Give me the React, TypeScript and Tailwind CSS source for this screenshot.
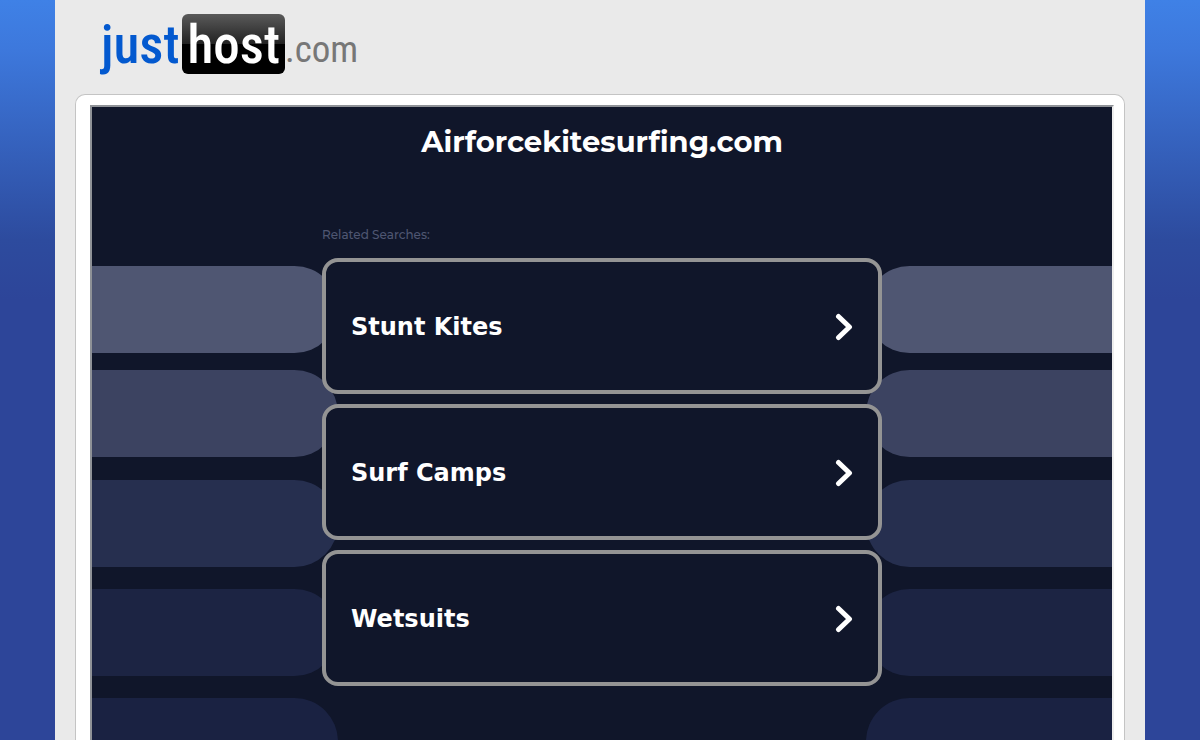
const searches = ['Stunt Kites', 'Surf Camps', 'Wetsuits'];

const stripes = [
  'bg-[#4f5672] mb-[17px]',
  'bg-[#3c4361] mb-[23px]',
  'bg-[#262f4f] mb-[22px]',
  'bg-[#1c2443] mb-[22px]',
  'bg-[#1a2242]',
];

function Logo() {
  return (
    <a
      href="#"
      aria-label="justhost.com"
      className="flex h-[60px] w-fit items-start whitespace-nowrap font-['Roboto_Condensed','Open_Sans_Condensed','Open_Sans',sans-serif] leading-[62px]"
    >
      <span className="text-[53px] font-medium text-[#0359cf]">just</span>
      <span className="ml-[3px] h-[60px] rounded-[6px] bg-[linear-gradient(#5a5a5a,#222_50%,#000_50%)] px-[5px] text-[53px] font-medium text-white">
        host
      </span>
      <span className="pt-[5px] text-[37px] text-[#777]">.com</span>
    </a>
  );
}

function Chevron() {
  return (
    <svg width="18" height="28" viewBox="0 0 18 28" fill="none" aria-hidden="true">
      <path d="M3.5 3.5 14.5 14 3.5 24.5" stroke="#fff" strokeWidth="5" strokeLinecap="round" strokeLinejoin="round" />
    </svg>
  );
}

function StripeColumn({ side }: { side: 'left' | 'right' }) {
  return (
    <div className="w-[calc(50%-264px)]">
      {stripes.map((stripe) => (
        <div
          key={stripe}
          className={`h-[87px] ${side === 'left' ? 'rounded-r-[44px]' : 'rounded-l-[44px]'} ${stripe}`}
        />
      ))}
    </div>
  );
}

export default function App() {
  return (
    <div className="min-h-screen bg-[#2d4599] bg-[linear-gradient(#3f81e6,#3d78dc_50px,#2d4b9e_240px,#2d4599_300px)]">
      <div className="mx-auto flex min-h-screen max-w-[1090px] flex-col bg-[#eaeaea] px-5">
        <header className="px-[26px] pt-[14px] pb-5">
          <Logo />
        </header>
        <div className="flex flex-1 flex-col rounded-t-[10px] border border-b-0 border-[#c4c4c4] bg-white px-[14px] pt-[10px] pr-[10px]">
          <main className="relative flex flex-1 flex-col items-center overflow-hidden border-2 border-b-0 border-t-[#8f9297] border-r-[#eeeeee] border-l-[#8f9297] bg-[#10162a] px-4 pb-12">
            <div aria-hidden="true" className="absolute inset-0 flex justify-between pt-[159px]">
              <StripeColumn side="left" />
              <StripeColumn side="right" />
            </div>
            <h1 className="relative mt-4 font-['Montserrat','Inter',sans-serif] text-[29px] leading-[38px] font-bold text-white">
              Airforcekitesurfing.com
            </h1>
            <section className="relative mt-[66px] w-full max-w-[560px]">
              <h2 className="font-['Montserrat','Inter',sans-serif] text-xs leading-4 font-medium text-[#4f5672]">
                Related Searches:
              </h2>
              <ul className="mt-[15px] flex flex-col gap-[10px]">
                {searches.map((label) => (
                  <li key={label}>
                    <a
                      href="#"
                      className="flex h-[136px] items-center justify-between rounded-2xl border-4 border-[#949494] bg-[#10162a] px-[25px] pt-0.5 font-['Verdana','DejaVu_Sans',sans-serif] text-2xl font-bold text-white"
                    >
                      {label}
                      <Chevron />
                    </a>
                  </li>
                ))}
              </ul>
            </section>
          </main>
        </div>
      </div>
    </div>
  );
}
